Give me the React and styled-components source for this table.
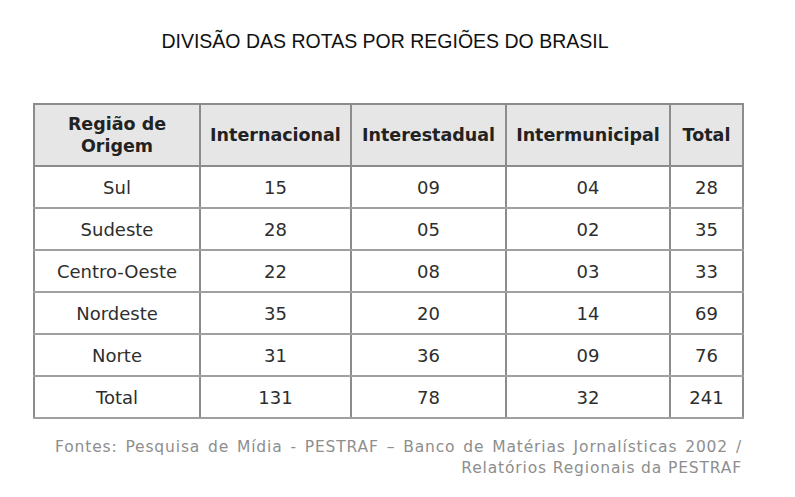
import React from "react";
import styled, { createGlobalStyle } from "styled-components";

const Global = createGlobalStyle`
  html, body { margin: 0; padding: 0; background: #fff; }
  body { width: 795px; height: 497px; overflow: hidden; }
`;

const Page = styled.div`
  display: flex;
  flex-direction: column;
  align-items: flex-start;
  padding: 30px 0 0 33px;
`;

const Title = styled.h1`
  align-self: stretch;
  margin: 0 58px 0 0;
  text-align: center;
  font-family: "Liberation Sans", Arial, sans-serif;
  font-weight: 400;
  font-size: 19.5px;
  line-height: 22px;
  color: #111;
`;

const Table = styled.table`
  margin-top: 51px;
  border-collapse: collapse;
  width: 709px;
  table-layout: fixed;
  font-family: "DejaVu Sans", Verdana, sans-serif;
  color: #2a2a2a;
  border: 2px solid #8c8c8c;
`;

const Th = styled.th`
  height: 60px;
  padding: 0;
  background: #e6e6e6;
  border: 2px solid #8c8c8c;
  font-size: 17.5px;
  font-weight: 700;
  line-height: 22px;
  color: #222;
  text-align: center;
`;

const Td = styled.td`
  height: 40px;
  padding: 0;
  border: 2px solid #a0a0a0;
  border-left-color: #8c8c8c;
  border-right-color: #8c8c8c;
  font-size: 18px;
  text-align: center;
  color: #2e2e2e;
`;

const Source = styled.p`
  width: 687px;
  margin: 18px 0 0 22px;
  font-family: "DejaVu Sans", Verdana, sans-serif;
  font-size: 15.5px;
  line-height: 21px;
  letter-spacing: 0.85px;
  word-spacing: 0;
  color: #8e8e8e;
  text-align: justify;
  text-align-last: right;
`;

const cols = [166, 151, 155, 164, 73];
const rows = [
  ["Sul", "15", "09", "04", "28"],
  ["Sudeste", "28", "05", "02", "35"],
  ["Centro-Oeste", "22", "08", "03", "33"],
  ["Nordeste", "35", "20", "14", "69"],
  ["Norte", "31", "36", "09", "76"],
  ["Total", "131", "78", "32", "241"],
];

export default function App() {
  return (
    <>
      <Global />
      <Page>
        <Title>DIVISÃO DAS ROTAS POR REGIÕES DO BRASIL</Title>
        <Table>
          <colgroup>
            {cols.map((w, i) => (
              <col key={i} style={{ width: w }} />
            ))}
          </colgroup>
          <thead>
            <tr>
              <Th>Região de<br />Origem</Th>
              <Th>Internacional</Th>
              <Th>Interestadual</Th>
              <Th>Intermunicipal</Th>
              <Th>Total</Th>
            </tr>
          </thead>
          <tbody>
            {rows.map((r) => (
              <tr key={r[0]}>
                {r.map((c, i) => (
                  <Td key={i}>{c}</Td>
                ))}
              </tr>
            ))}
          </tbody>
        </Table>
        <Source>
          Fontes: Pesquisa de Mídia - PESTRAF – Banco de Matérias Jornalísticas 2002 / Relatórios Regionais da PESTRAF
        </Source>
      </Page>
    </>
  );
}
